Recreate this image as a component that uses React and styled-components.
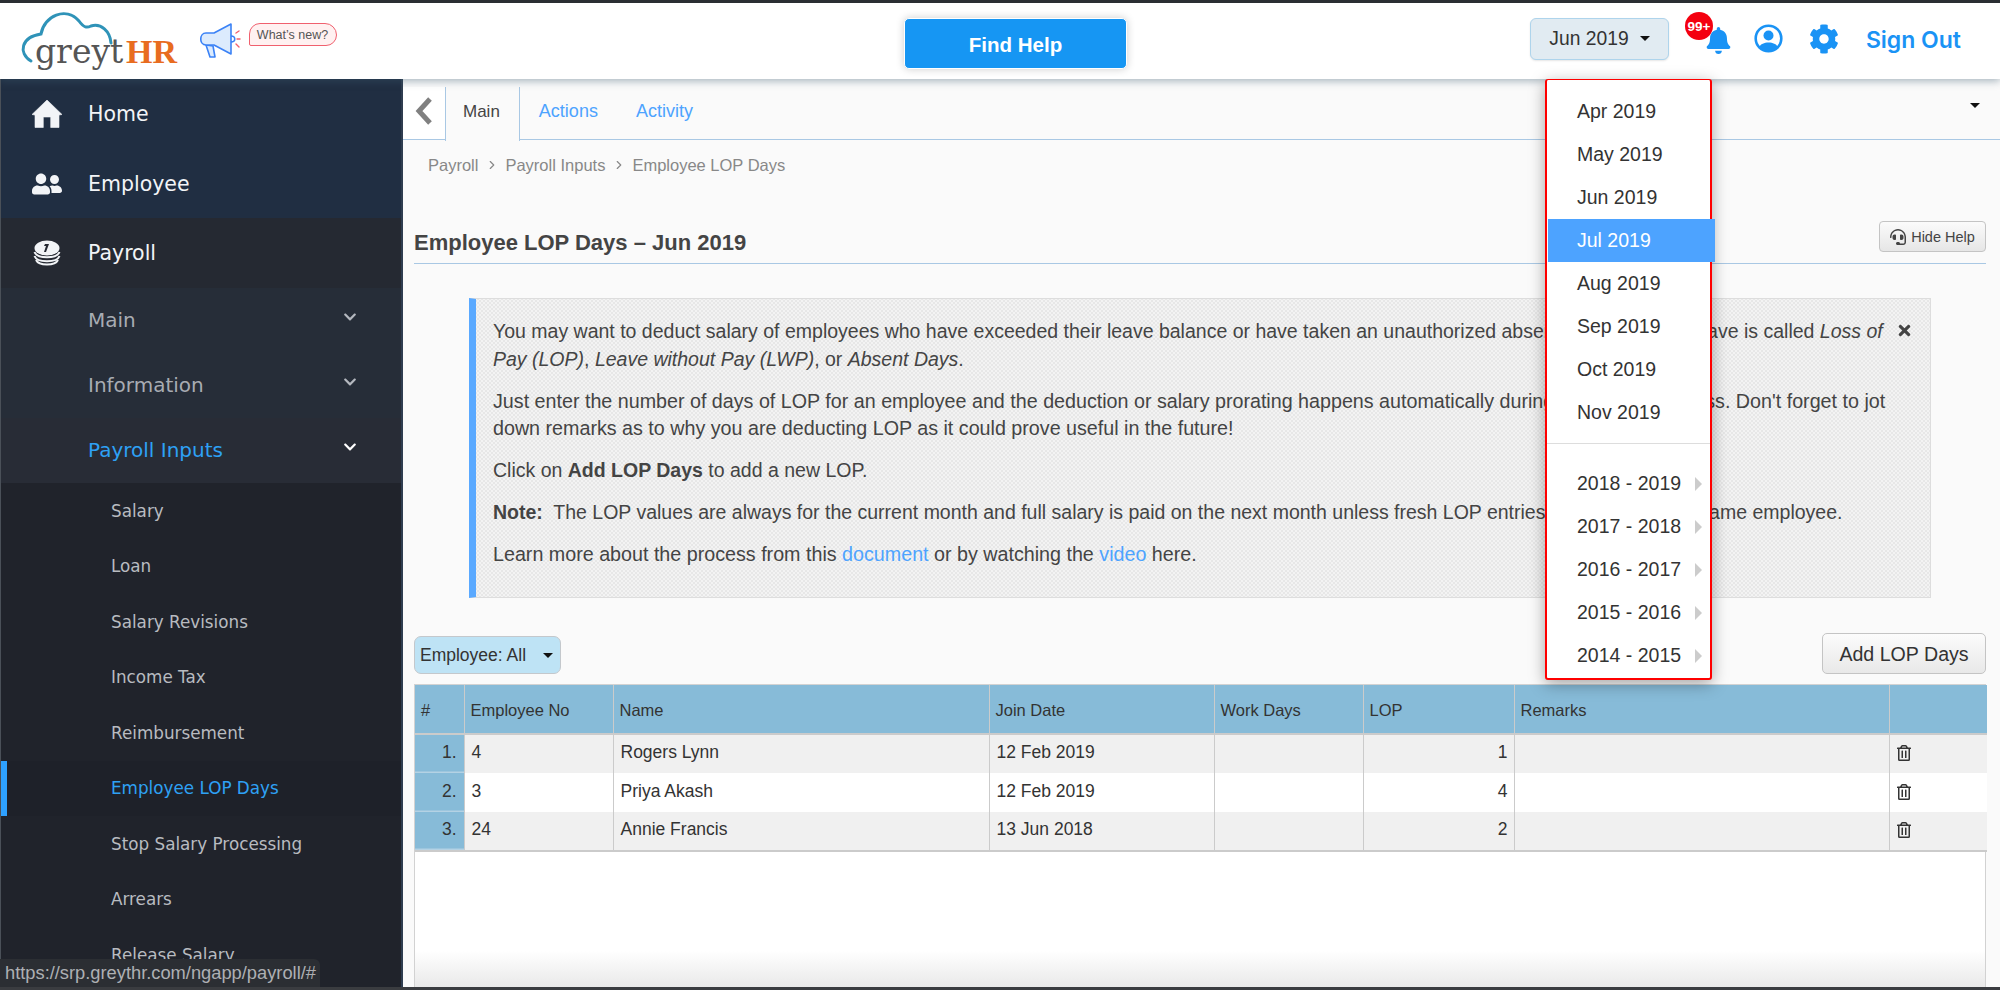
import React from "react";
import styled, { createGlobalStyle } from "styled-components";
import { FaUserFriends, FaChevronDown, FaBell, FaCog, FaRegTrashAlt, FaHeadset, FaTimes } from "react-icons/fa";
import { ChevronRight } from "lucide-react";

const GlobalStyle = createGlobalStyle`
  html, body { margin: 0; padding: 0; background: #fafafa; }
  body { font-family: "Liberation Sans", Arial, sans-serif; color: #333; }
  * { box-sizing: border-box; }
`;

const Page = styled.div`
  position: relative;
  width: 2000px;
  height: 990px;
  overflow: hidden;
  display: flex;
  flex-direction: column;
  border-top: 3px solid #2a2e33;
  border-bottom: 3px solid #3a3c40;
`;

const Header = styled.header`
  position: relative;
  z-index: 2;
  height: 76px;
  flex: none;
  display: grid;
  grid-template-columns: 904px 223px 1fr;
  align-items: start;
  background: #fff;
  box-shadow: 0 2px 8px rgba(60, 90, 110, 0.45);
`;

const Brand = styled.div`
  display: flex;
  align-items: flex-start;
`;

const WhatsNew = styled.span`
  margin: 20px 0 0 6.5px;
  width: 88px;
  height: 23px;
  display: flex;
  align-items: center;
  justify-content: center;
  font-size: 12.5px;
  color: #555;
  background: #fff1f1;
  border: 1.5px solid #f0606e;
  border-radius: 11px 12px 11px 2px;
`;

const FindHelp = styled.button`
  margin-top: 15px;
  height: 51px;
  padding: 3px 0 0;
  border: 1px solid #fff;
  border-radius: 5px;
  background: #1696f3;
  color: #fff;
  font: bold 20.5px "Liberation Sans", Arial, sans-serif;
  box-shadow: 0 0 8px rgba(0, 0, 0, 0.2);
`;

const Tools = styled.div`
  display: flex;
  align-items: center;
  justify-content: flex-end;
  height: 47px;
  margin-top: 12px;
  padding-right: 39px;
  color: #1a93f5;
`;

const MonthButton = styled.button`
  width: 139px;
  height: 42px;
  margin-right: 35.6px;
  display: flex;
  align-items: center;
  gap: 11px;
  padding: 0 0 0 18px;
  background: #e1ebf2;
  border: 1.5px solid #aed4ec;
  border-radius: 6px;
  color: #333;
  font: 19.3px "Liberation Sans", Arial, sans-serif;
  box-shadow: 0 1px 2px rgba(0, 0, 0, 0.1);
`;

const Caret = styled.i`
  display: inline-block;
  width: 0;
  height: 0;
  border-left: ${(p) => p.$size || 5}px solid transparent;
  border-right: ${(p) => p.$size || 5}px solid transparent;
  border-top: ${(p) => p.$size || 5}px solid #111;
`;

const BellWrap = styled.div`
  position: relative;
  display: flex;
  margin-right: 22px;
  margin-top: 4px;
`;

const Badge = styled.span`
  position: absolute;
  top: -15px;
  left: -20px;
  width: 28px;
  height: 28px;
  border-radius: 50%;
  background: #f4000f;
  color: #fff;
  font: bold 13.5px "Liberation Sans", Arial, sans-serif;
  display: flex;
  align-items: center;
  justify-content: center;
`;

const SignOut = styled.a`
  margin-left: 26.6px;
  padding-top: 2px;
  font: 600 23px Inter, "Liberation Sans", sans-serif;
  color: #1a93f5;
`;

const Body = styled.div`
  flex: 1;
  min-height: 0;
  display: flex;
`;

const Sidebar = styled.nav`
  width: 403px;
  flex: none;
  overflow: hidden;
  background: #20232b;
  border-left: 1px solid #4a5058;
  border-right: 2px solid #2f3d50;
  font-family: "DejaVu Sans", Verdana, sans-serif;
`;

const TopItem = styled.div`
  height: ${(p) => p.$h}px;
  display: flex;
  align-items: center;
  padding-top: ${(p) => p.$nudge || 0}px;
  background: ${(p) => p.$bg};
  color: #f2f4f7;
  font-size: 20.5px;
  svg { width: 30px; margin: 0 26px 0 31px; flex: none; }
`;

const GroupItem = styled.div`
  height: 65px;
  display: flex;
  align-items: center;
  justify-content: space-between;
  padding: 0 44px 1px 87px;
  font-size: 20px;
  background: ${(p) => (p.$active ? "#282c36" : "#262d38")};
  color: ${(p) => (p.$active ? "#2ea1f5" : "#a8acb3")};
  svg { color: ${(p) => (p.$active ? "#fff" : "#b4b8bf")}; margin-bottom: 7px; }
`;

const SubItem = styled.div`
  height: 55.5px;
  display: flex;
  align-items: center;
  padding-left: 110px;
  font-size: 16.8px;
  color: ${(p) => (p.$active ? "#2ea1f5" : "#b8bbc0")};
  background: ${(p) => (p.$active ? "#1e2129" : "transparent")};
  box-shadow: ${(p) => (p.$active ? "inset 6px 0 0 #2ea1ff" : "none")};
`;

const Main = styled.main`
  flex: 1;
  min-width: 0;
  display: flex;
  flex-direction: column;
  background: #fafafa;
  padding-top: 8px;
`;

const TabBar = styled.div`
  position: relative;
  height: 53px;
  flex: none;
  display: flex;
  align-items: stretch;
  border-bottom: 1.5px solid #a9c8e4;
`;

const BackTab = styled.div`
  width: 42px;
  display: flex;
  align-items: center;
  justify-content: center;
  background: #fff;
  padding-bottom: 4px;
`;

const Tab = styled.div`
  display: flex;
  align-items: center;
  padding: 0 19px 4px ${(p) => (p.$active ? 17 : 19)}px;
  margin-bottom: ${(p) => (p.$active ? -1.5 : 0)}px;
  font-size: ${(p) => (p.$active ? 17 : 18)}px;
  color: ${(p) => (p.$active ? "#444" : "#4da3ff")};
  background: ${(p) => (p.$active ? "#fafafa" : "transparent")};
  border-left: ${(p) => (p.$active ? "1.5px solid #a9c8e4" : "none")};
  border-right: ${(p) => (p.$active ? "1.5px solid #a9c8e4" : "none")};
`;

const TabMenu = styled.span`
  position: absolute;
  right: 20px;
  top: 16px;
  display: flex;
`;

const Content = styled.div`
  flex: 1;
  min-height: 0;
  display: flex;
  flex-direction: column;
  padding: 0 14px 0 11px;
`;

const Crumbs = styled.div`
  display: flex;
  align-items: center;
  gap: 6.5px;
  height: 50px;
  padding-left: 14px;
  font-size: 16.5px;
  color: #888;
`;

const TitleRow = styled.div`
  margin-top: 27px;
  height: 47px;
  flex: none;
  display: flex;
  align-items: flex-start;
  justify-content: space-between;
  border-bottom: 1.5px solid #a9c8e4;
`;

const Title = styled.h1`
  margin: 11px 0 0;
  font-size: 22px;
  line-height: 30px;
  font-weight: bold;
  color: #444;
`;

const HideHelp = styled.button`
  margin-top: 4px;
  width: 107px;
  height: 31px;
  display: flex;
  align-items: center;
  justify-content: center;
  gap: 5px;
  padding: 0;
  background: linear-gradient(#fbfbfb, #e6e6e6);
  border: 1px solid #c4c4c4;
  border-radius: 4px;
  color: #444;
  font: 14.5px "Liberation Sans", Arial, sans-serif;
`;

const HelpBox = styled.section`
  position: relative;
  margin: 34px 55px 0 55px;
  height: 300px;
  flex: none;
  padding: 19px 32px 0 17px;
  border: 1px solid #ddd;
  border-left: 7px solid #5aa9ff;
  background-color: #e7e7e7;
  background-image: radial-gradient(#f3f3f3 1px, transparent 1.2px),
    radial-gradient(#f3f3f3 1px, transparent 1.2px);
  background-size: 4px 4px;
  background-position: 0 0, 2px 2px;
  line-height: 27.8px;
  color: #444;
  a { color: #4da3ff; }
`;

const Para = styled.p`
  margin: 0 0 14px;
  font-size: ${(p) => (p.$wide ? 19.7 : 19.5)}px;
`;

const CloseIcon = styled.span`
  position: absolute;
  top: 23px;
  right: 17px;
  display: flex;
  color: #444;
`;

const ActionRow = styled.div`
  margin-top: 35px;
  height: 51px;
  flex: none;
  display: flex;
  align-items: flex-start;
  justify-content: space-between;
`;

const EmployeeFilter = styled.button`
  margin-top: 3px;
  width: 147px;
  height: 38px;
  display: flex;
  align-items: center;
  gap: 17px;
  padding: 0 0 0 5px;
  background: #bee3f5;
  border: 1px solid #c4c8cc;
  border-radius: 7px;
  color: #333;
  font: 17.5px "Liberation Sans", Arial, sans-serif;
`;

const AddButton = styled.button`
  width: 164px;
  height: 41px;
  padding: 1px 0 0;
  background: linear-gradient(#fcfcfc, #e8e8e8);
  border: 1px solid #c4c4c4;
  border-radius: 5px;
  color: #333;
  font: 19.6px "Liberation Sans", Arial, sans-serif;
`;

const TableWrap = styled.div`
  flex: 1;
  min-height: 0;
  border: 1.5px solid #d2d2d2;
  border-bottom: none;
  background: linear-gradient(#fff 0, #fff 88%, #e9e9e9 100%);
`;

const Table = styled.table`
  width: 100%;
  table-layout: fixed;
  border-collapse: collapse;
  font-size: 17.5px;
  color: #333;
  border-bottom: 2px solid #cbcbcb;
  th, td { border-left: 1.5px solid #cbcbcb; border-right: 1.5px solid #cbcbcb; }
  tr > :first-child { border-left: none; }
  tr > :last-child { border-right: none; }
  th { border-bottom: 2px solid #cbcbcb; }
`;

const Th = styled.th`
  height: 49px;
  padding: 2px 6px 0;
  background: #87bbd8;
  text-align: left;
  font-weight: normal;
  font-size: 16.5px;
`;

const Td = styled.td`
  height: 39px;
  padding: 0 ${(p) => (p.$right ? 6 : 7)}px 3px;
  text-align: ${(p) => (p.$right ? "right" : "left")};
  background: ${(p) => (p.$odd ? "#f0f0f0" : "#fff")};
`;

const IndexCell = styled.td`
  height: 39px;
  padding: 0 7px 3px 0;
  text-align: right;
  background: #87bbd8;
  box-shadow: inset 0 -1.5px 0 #b4d2e4;
`;

const TrashButton = styled.span`
  display: inline-flex;
  margin: 6px 0 0 -1px;
`;

const Menu = styled.div`
  position: absolute;
  z-index: 5;
  left: 1545px;
  top: 76px;
  width: 167px;
  height: 601px;
  padding-top: 10px;
  background: #fff;
  border: 2px solid #f00;
  border-top-width: 1.5px;
  border-radius: 3px;
  box-shadow: 0 4px 16px rgba(0, 0, 0, 0.35);
`;

const MenuItem = styled.div`
  height: 43px;
  margin-right: ${(p) => (p.$active ? -5 : 0)}px;
  margin-left: 1px;
  display: flex;
  align-items: center;
  justify-content: space-between;
  padding: 0 ${(p) => (p.$active ? 13 : 8)}px 0 29px;
  font-size: 19.5px;
  color: ${(p) => (p.$active ? "#fff" : "#333")};
  background: ${(p) => (p.$active ? "#4da3ff" : "transparent")};
`;

const MenuDivider = styled.hr`
  margin: 9px 0 18px;
  border: none;
  border-top: 1.5px solid #ddd;
`;

const SubArrow = styled.i`
  width: 0;
  height: 0;
  border-top: 7px solid transparent;
  border-bottom: 7px solid transparent;
  border-left: 7px solid #ccc;
`;

const StatusBar = styled.div`
  position: absolute;
  z-index: 6;
  left: 0;
  bottom: 0;
  width: 320px;
  height: 28px;
  padding-left: 5px;
  display: flex;
  align-items: center;
  background: #2b2e33;
  border-radius: 0 6px 0 0;
  color: #aeb0b3;
  font-size: 18.3px;
  white-space: nowrap;
`;

const Logo = () => (
  <svg width="200" height="76" viewBox="0 0 200 76">
    <path
      d="M31 58 C18 50 21 34 41 31 C44 13 66 3 79 18 C84 25 87 25 91 23 C101 20 110 28 111 40"
      fill="none"
      stroke="#2f93b8"
      strokeWidth="3"
      strokeLinecap="round"
    />
    <text x="35" y="60" fontFamily="'DejaVu Serif', serif" fontSize="33" fill="#555">
      greyt
    </text>
    <text x="126" y="60" fontFamily="'Liberation Serif', serif" fontWeight="bold" fontSize="34" fill="#e86c1f">
      HR
    </text>
  </svg>
);

const Megaphone = () => (
  <svg width="42" height="40" viewBox="0 0 42 40" style={{ marginTop: 17 }}>
    <g fill="#dcebfd" stroke="#3b82f6" strokeWidth="1.6" strokeLinejoin="round">
      <path d="M6 25 L10 37 L15 37 L13 26 Z" />
      <path d="M6 13 L14 13 L31 4 L31 34 L14 25 L6 25 C-1 25 -1 13 6 13 Z" />
      <path d="M31 16 C36 16 36 22 31 22" fill="none" />
    </g>
    <g stroke="#f0606e" strokeWidth="1.4" strokeLinecap="round">
      <path d="M36 13 L39 11" />
      <path d="M37 19 L40 19" />
      <path d="M36 24 L39 27" />
    </g>
  </svg>
);

const HomeIcon = () => (
  <svg width="30" height="28" viewBox="0 0 30 28">
    <path
      d="M15 0 L30 14.5 L27 15 L27 27.5 L18.7 27.5 L18.7 17 L11.3 17 L11.3 27.5 L3 27.5 L3 15 L0 14.5 Z"
      fill="#f2f4f7"
      stroke="#f2f4f7"
      strokeWidth="0.6"
      strokeLinejoin="round"
    />
  </svg>
);

const Coins = () => (
  <svg width="30" height="26" viewBox="0 0 30 26">
    <ellipse cx="15" cy="8" rx="12.5" ry="7.5" fill="#f2f4f7" />
    <path d="M13 4 L17 4 L14 12 L12 12 L14 6 L12 6 Z" fill="#252932" />
    <path d="M2.5 12 C5 19 25 19 27.5 12" fill="none" stroke="#f2f4f7" strokeWidth="2" />
    <path d="M2.5 16 C5 23 25 23 27.5 16" fill="none" stroke="#f2f4f7" strokeWidth="2" />
    <path d="M4 20 C7 26 23 26 26 20" fill="none" stroke="#f2f4f7" strokeWidth="2" />
  </svg>
);

const UserRing = () => (
  <svg width="29" height="29" viewBox="0 0 29 29">
    <circle cx="14.5" cy="14.5" r="12.8" fill="none" stroke="#1a93f5" strokeWidth="2.6" />
    <circle cx="14.5" cy="11.5" r="5" fill="#1a93f5" />
    <path d="M5.5 23 C7 17 22 17 23.5 23 C19 28 10 28 5.5 23 Z" fill="#1a93f5" />
  </svg>
);

const BackArrow = () => (
  <svg width="18" height="30" viewBox="0 0 18 30">
    <path d="M15 3 L4 15 L15 27" fill="none" stroke="#808080" strokeWidth="5" />
  </svg>
);

const payrollInputs = [
  "Salary",
  "Loan",
  "Salary Revisions",
  "Income Tax",
  "Reimbursement",
  "Employee LOP Days",
  "Stop Salary Processing",
  "Arrears",
  "Release Salary",
];
const months = ["Apr 2019", "May 2019", "Jun 2019", "Jul 2019", "Aug 2019", "Sep 2019", "Oct 2019", "Nov 2019"];
const years = ["2018 - 2019", "2017 - 2018", "2016 - 2017", "2015 - 2016", "2014 - 2015"];
const columns = ["#", "Employee No", "Name", "Join Date", "Work Days", "LOP", "Remarks", ""];
const widths = [49, 149, 376, 225, 149, 151, 375, 98];
const rows = [
  { no: "4", name: "Rogers Lynn", joined: "12 Feb 2019", lop: 1 },
  { no: "3", name: "Priya Akash", joined: "12 Feb 2019", lop: 4 },
  { no: "24", name: "Annie Francis", joined: "13 Jun 2018", lop: 2 },
];

export default function App() {
  return (
    <Page>
      <GlobalStyle />
      <Header>
        <Brand>
          <Logo />
          <Megaphone />
          <WhatsNew>What’s new?</WhatsNew>
        </Brand>
        <FindHelp>Find Help</FindHelp>
        <Tools>
          <MonthButton>
            Jun 2019 <Caret />
          </MonthButton>
          <BellWrap>
            <FaBell size={27} />
            <Badge>99+</Badge>
          </BellWrap>
          <UserRing />
          <FaCog size={30} style={{ marginLeft: 26.4 }} />
          <SignOut>Sign Out</SignOut>
        </Tools>
      </Header>

      <Body>
        <Sidebar>
          <TopItem $h={69} $bg="#202e42">
            <HomeIcon />
            Home
          </TopItem>
          <TopItem $h={70} $bg="#202e42" $nudge={2}>
            <FaUserFriends size={28} />
            Employee
          </TopItem>
          <TopItem $h={70} $bg="#252932">
            <Coins />
            Payroll
          </TopItem>
          <GroupItem>
            Main <FaChevronDown size={14} />
          </GroupItem>
          <GroupItem>
            Information <FaChevronDown size={14} />
          </GroupItem>
          <GroupItem $active>
            Payroll Inputs <FaChevronDown size={14} />
          </GroupItem>
          {payrollInputs.map((name) => (
            <SubItem key={name} $active={name === "Employee LOP Days"}>
              {name}
            </SubItem>
          ))}
        </Sidebar>

        <Main>
          <TabBar>
            <BackTab>
              <BackArrow />
            </BackTab>
            <Tab $active>Main</Tab>
            <Tab>Actions</Tab>
            <Tab>Activity</Tab>
            <TabMenu>
              <Caret />
            </TabMenu>
          </TabBar>

          <Content>
            <Crumbs>
              Payroll <ChevronRight size={14} /> Payroll Inputs <ChevronRight size={14} /> Employee LOP Days
            </Crumbs>

            <TitleRow>
              <Title>Employee LOP Days – Jun 2019</Title>
              <HideHelp>
                <FaHeadset size={16} /> Hide Help
              </HideHelp>
            </TitleRow>

            <HelpBox>
              <CloseIcon>
                <FaTimes size={17} />
              </CloseIcon>
              <Para>
                You may want to deduct salary of employees who have exceeded their leave balance or have taken an
                unauthorized absence. This type of leave is called <em>Loss of Pay (LOP)</em>,{" "}
                <em>Leave without Pay (LWP)</em>, or <em>Absent Days</em>.
              </Para>
              <Para $wide>
                Just enter the number of days of LOP for an employee and the deduction or salary prorating happens
                automatically during the payroll process. Don't forget to jot down remarks as to why you are deducting
                LOP as it could prove useful in the future!
              </Para>
              <Para>
                Click on <strong>Add LOP Days</strong> to add a new LOP.
              </Para>
              <Para>
                <strong>Note:</strong>&nbsp; The LOP values are always for the current month and full salary is paid on
                the next month unless fresh LOP entries are made for the same employee.
              </Para>
              <Para $wide>
                Learn more about the process from this <a>document</a> or by watching the <a>video</a> here.
              </Para>
            </HelpBox>

            <ActionRow>
              <EmployeeFilter>
                Employee: All <Caret />
              </EmployeeFilter>
              <AddButton>Add LOP Days</AddButton>
            </ActionRow>

            <TableWrap>
              <Table>
                <colgroup>
                  {widths.map((w, i) => (
                    <col key={i} width={w} />
                  ))}
                </colgroup>
                <thead>
                  <tr>
                    {columns.map((c, i) => (
                      <Th key={i}>{c}</Th>
                    ))}
                  </tr>
                </thead>
                <tbody>
                  {rows.map((r, i) => (
                    <tr key={r.no}>
                      <IndexCell>{i + 1}.</IndexCell>
                      <Td $odd={i % 2 === 0}>{r.no}</Td>
                      <Td $odd={i % 2 === 0}>{r.name}</Td>
                      <Td $odd={i % 2 === 0}>{r.joined}</Td>
                      <Td $odd={i % 2 === 0} />
                      <Td $odd={i % 2 === 0} $right>
                        {r.lop}
                      </Td>
                      <Td $odd={i % 2 === 0} />
                      <Td $odd={i % 2 === 0}>
                        <TrashButton>
                          <FaRegTrashAlt size={16} />
                        </TrashButton>
                      </Td>
                    </tr>
                  ))}
                </tbody>
              </Table>
            </TableWrap>
          </Content>
        </Main>
      </Body>

      <Menu>
        {months.map((m) => (
          <MenuItem key={m} $active={m === "Jul 2019"}>
            {m}
          </MenuItem>
        ))}
        <MenuDivider />
        {years.map((y) => (
          <MenuItem key={y}>
            {y} <SubArrow />
          </MenuItem>
        ))}
      </Menu>
      <StatusBar>https://srp.greythr.com/ngapp/payroll/#</StatusBar>
    </Page>
  );
}
